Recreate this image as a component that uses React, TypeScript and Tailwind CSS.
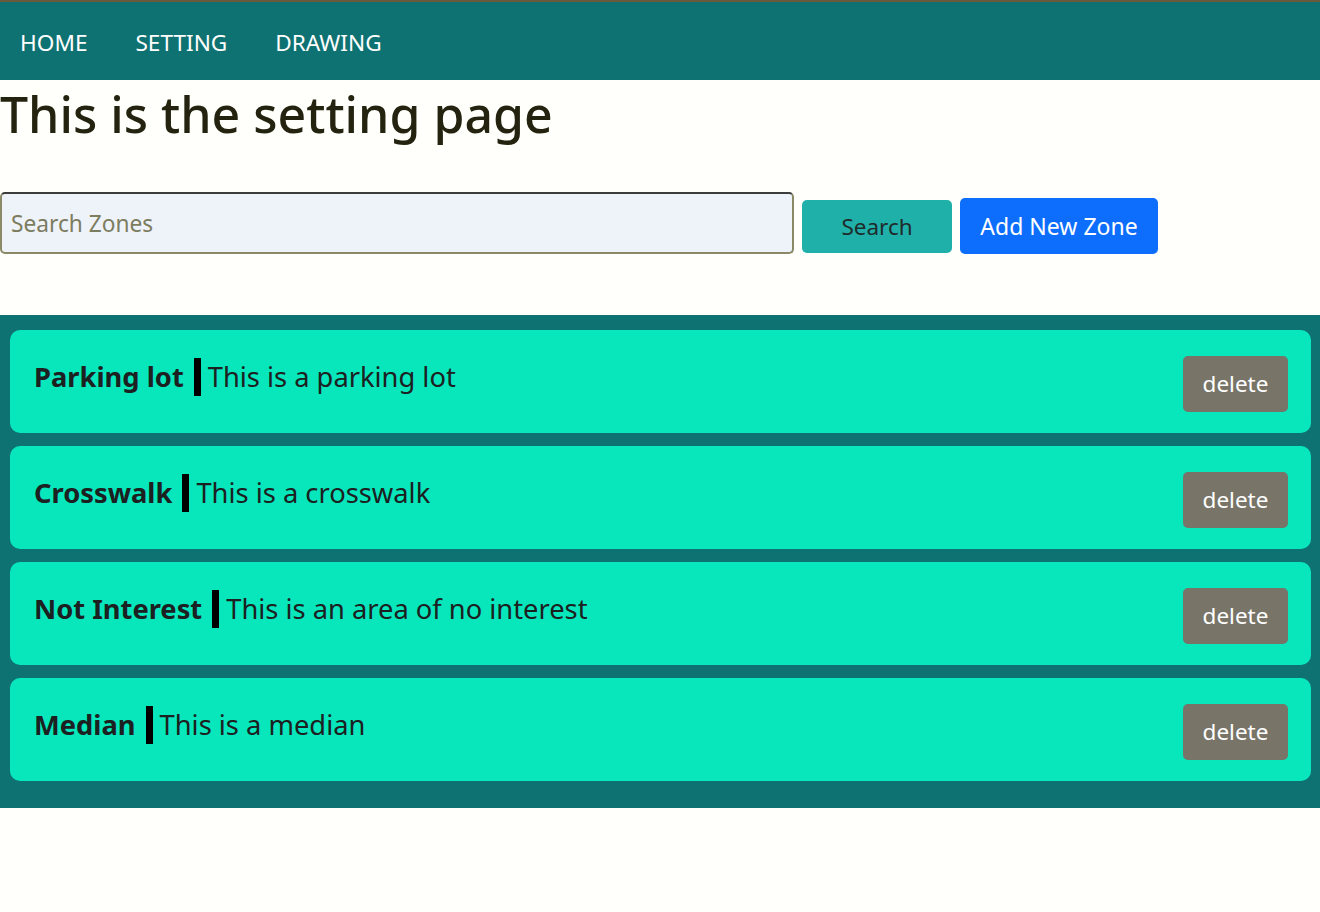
import React from 'react';

const zones = [
  { name: 'Parking lot', description: 'This is a parking lot' },
  { name: 'Crosswalk', description: 'This is a crosswalk' },
  { name: 'Not Interest', description: 'This is an area of no interest' },
  { name: 'Median', description: 'This is a median' },
];

function NavBar() {
  return (
    <nav className="h-[80px] bg-[#0f7272] border-t-2 border-[#6b5a3a] flex items-center pl-[20px] pt-[4px] gap-[48px] text-white text-[22.6px] uppercase">
      <a className="cursor-pointer">Home</a>
      <a className="cursor-pointer">Setting</a>
      <a className="cursor-pointer">Drawing</a>
    </nav>
  );
}

function ZoneCard({ name, description }: { name: string; description: string }) {
  return (
    <div className="h-[103px] bg-[#08e6bc] rounded-[10px] flex items-center justify-between pl-[24px] pr-[23px]">
      <div className="flex items-center text-[27.3px] text-[#1c2020] -mt-[9px]">
        <span className="font-bold">{name}</span>
        <span className="w-[7px] h-[38px] bg-black ml-[10px] mr-[7px]" />
        <span>{description}</span>
      </div>
      <button className="h-[56px] w-[105px] bg-[#787468] text-white text-[22.5px] rounded-[5px] mt-[4px]">
        delete
      </button>
    </div>
  );
}

export default function App() {
  return (
    <div
      className="min-h-[912px] bg-[#fffffc] text-[#222]"
      style={{ fontFamily: '"Noto Sans", "Open Sans", sans-serif' }}
    >
      <NavBar />
      <h1 className="text-[50px] font-medium leading-[1.2] text-[#23230f] mt-[4px]">
        This is the setting page
      </h1>

      <div className="flex items-start gap-[8px] mt-[48px]">
        <input
          placeholder="Search Zones"
          className="w-[794px] h-[62px] bg-[#eef2f9] border-2 border-[#8a8a66] border-t-[#3c3c3c] rounded-[5px] pl-[9px] text-[22.7px] placeholder:text-[#7c7c5e] outline-none"
        />
        <button className="w-[150px] h-[53px] mt-[8px] bg-[#20b0aa] text-[#1f2b2b] text-[22.5px] rounded-[5px]">
          Search
        </button>
        <button className="h-[56px] w-[198px] mt-[6px] bg-[#0d6efd] text-white text-[23px] rounded-[5px]">
          Add New Zone
        </button>
      </div>

      <div className="mt-[61px] bg-[#0f7272] pt-[15px] pb-[27px] pl-[10px] pr-[9px] flex flex-col gap-[13px]">
        {zones.map((z) => (
          <ZoneCard key={z.name} name={z.name} description={z.description} />
        ))}
      </div>
    </div>
  );
}
